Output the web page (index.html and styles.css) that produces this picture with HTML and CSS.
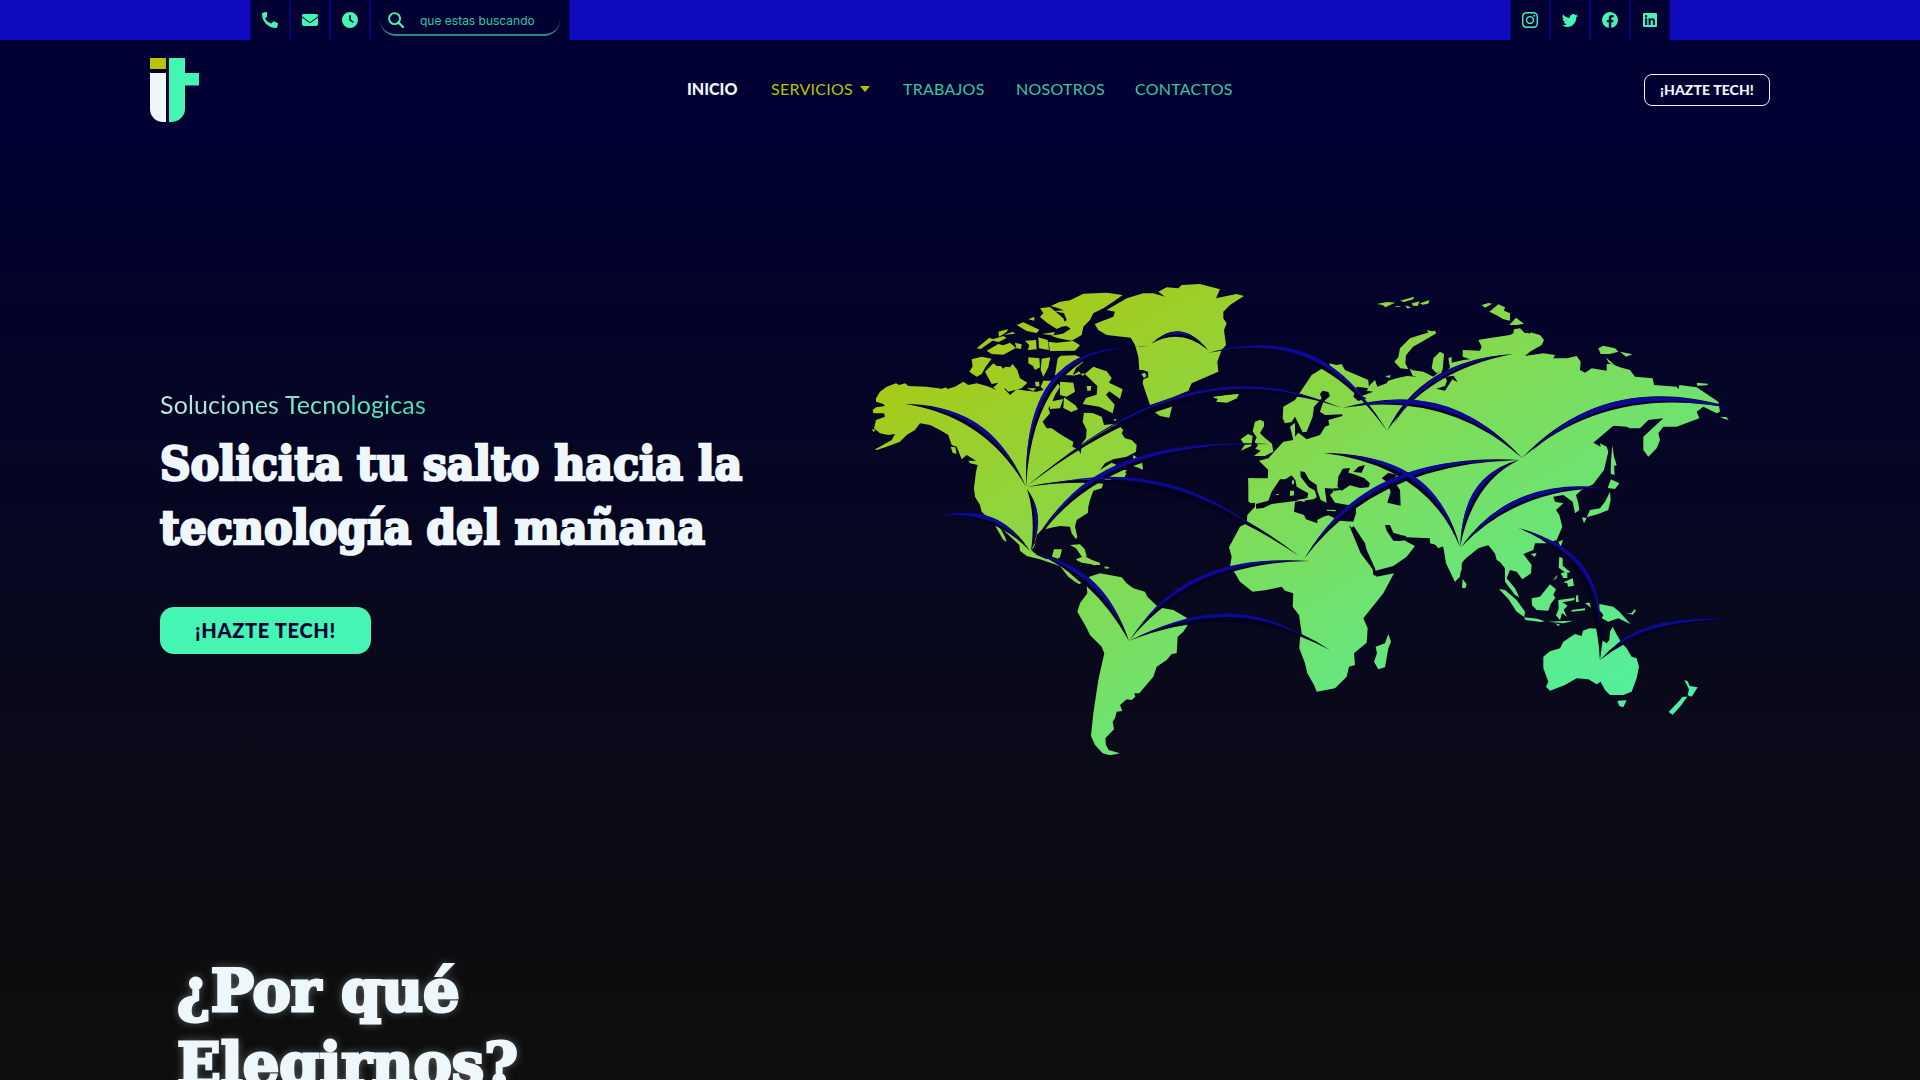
FILE: index.html
```html
<!DOCTYPE html>
<html lang="es">
<head>
<meta charset="utf-8">
<title>IT</title>
<link rel="stylesheet" href="styles.css">
</head>
<body>
<div class="topbar">
  <div class="cells">
    <a class="cell"><svg viewBox="0 0 512 512"><path d="M165 25c-8-19-28-29-48-23L29 26C12 31 0 46 0 64c0 247 201 448 448 448 18 0 33-12 38-29l24-88c6-20-4-40-23-48l-96-40c-17-7-36-2-47 12l-41 50C193 335 133 275 99 209l49-41c14-11 19-31 12-47z"/></svg></a>
    <a class="cell"><svg viewBox="0 0 512 512"><path d="M48 64a48 48 0 0 0-29 86l218 164a32 32 0 0 0 38 0l218-164a48 48 0 0 0-29-86zM0 176v208a64 64 0 0 0 64 64h384a64 64 0 0 0 64-64V176L294 339a64 64 0 0 1-76 0z"/></svg></a>
    <a class="cell"><svg viewBox="0 0 512 512"><path d="M256 512a256 256 0 1 1 0-512 256 256 0 0 1 0 512m-24-392v136c0 8 4 16 11 20l96 64a24 24 0 0 0 26-40l-85-57V120a24 24 0 0 0-48 0"/></svg></a>
    <div class="cell cell-search">
      <div class="search">
        <svg viewBox="0 0 16 16"><g fill="none" stroke="#44f5b3" stroke-width="1.900"><circle cx="6.600" cy="6.600" r="5.500"/><path d="M10.500 10.500l4.500 4.500" stroke-width="2.200" stroke-linecap="round"/></g></svg>
        <span>que estas buscando</span>
      </div>
    </div>
  </div>
  <div class="cells">
    <a class="cell"><svg viewBox="0 0 16 16"><g fill="none" stroke="#44f5b3" stroke-width="1.440"><rect x=".7" y=".7" width="14.600" height="14.600" rx="4"/><circle cx="8" cy="8" r="3.400"/></g><circle cx="12.300" cy="3.700" r="1"/></svg></a>
    <a class="cell"><svg viewBox="0 0 16 16"><path d="M5 15c6 0 9.300-5 9.300-9.300v-.4A6.700 6.700 0 0 0 16 3.500a6.500 6.500 0 0 1-1.900.5 3.300 3.300 0 0 0 1.400-1.800 6.500 6.500 0 0 1-2 .8 3.300 3.300 0 0 0-5.600 3A9.300 9.300 0 0 1 1.100 2.600a3.300 3.300 0 0 0 1 4.400A3.300 3.300 0 0 1 .6 6.600a3.300 3.300 0 0 0 2.700 3.200 3.200 3.200 0 0 1-1.500.1 3.300 3.300 0 0 0 3.100 2.200A6.600 6.600 0 0 1 0 13.500 9.300 9.300 0 0 0 5 15"/></svg></a>
    <a class="cell"><svg viewBox="0 0 16 16"><path d="M16 8a8 8 0 1 0-9.200 7.900v-5.600h-2V8h2V6.300c0-2 1.200-3.200 3-3.200.9 0 1.800.2 1.800.2v2h-1c-1 0-1.300.6-1.300 1.200V8h2.200l-.4 2.300H9.300v5.600A8 8 0 0 0 16 8"/></svg></a>
    <a class="cell"><svg viewBox="0 0 16 16"><path d="M2 1h12a1 1 0 0 1 1 1v12a1 1 0 0 1-1 1H2a1 1 0 0 1-1-1V2a1 1 0 0 1 1-1m1.100 5.300v6.600h2.100V6.300zm1-3.300a1.200 1.200 0 1 0 0 2.400 1.200 1.200 0 0 0 0-2.400m2.500 3.300v6.600h2V9.600c0-2 2.300-2.100 2.300 0v3.300h2V8.800c0-3.200-3.200-3.100-4.300-1.600v-.9z" fill-rule="evenodd"/></svg></a>
  </div>
</div>

<header class="header">
  <svg class="logo" viewBox="0 0 49 64"><path fill="#b8c400" d="M0 0h16v11H0z"/><path fill="#eef7fb" d="M0 15h16v49h-3A13 13 0 0 1 0 51z"/><path fill="#44f5b3" d="M19 0h16v15h14v12.500H35V51a14 13 0 0 1-14 13h-2z"/></svg>
  <nav class="nav">
    <a class="active">INICIO</a>
    <a class="services">SERVICIOS<i class="caret"></i></a>
    <a class="jobs">TRABAJOS</a>
    <a class="about">NOSOTROS</a>
    <a class="contact">CONTACTOS</a>
  </nav>
  <a class="btn-outline">¡HAZTE TECH!</a>
</header>

<main class="hero">
  <div class="copy">
    <p class="kicker">Soluciones Tecnologicas</p>
    <h1>Solicita tu salto hacia la<br>tecnología del mañana</h1>
    <a class="btn-solid">¡HAZTE TECH!</a>
  </div>
  <svg class="map" viewBox="860 270 890 500">
    <defs>
      <linearGradient id="land" x1="0" y1="0" x2="1" y2="1"><stop offset="0" stop-color="#b3c504"/><stop offset="1" stop-color="#44f5b3"/></linearGradient>
      <mask id="world" maskUnits="userSpaceOnUse" x="860" y="270" width="890" height="500">
        <!-- North and Central America -->
        <g fill="#fff" transform="translate(860 270) scale(.33333)">
          <path d="M48 385L60 365 80 350 108 340 118 345 135 340 145 348 200 350 245 356 258 352 262 357 285 350 310 335 325 345 350 340 380 348 410 360 400 352 430 353 450 375 470 358 500 362 530 365 550 360 570 345 590 335 600 350 585 375 575 400 565 415 570 430 548 455 560 475 575 475 600 492 630 510 640 515 637 530 655 538 662 552 666 520 678 505 680 480 668 455 672 428 700 430 725 440 732 465 760 462 775 465 790 480 785 490 795 505 815 510 830 525 828 545 800 560 760 568 735 580 720 600 755 578 770 585 765 595 800 600 790 620 760 625 730 640 725 655 700 662 690 690 685 710 684 728 650 750 645 770 652 800 648 808 635 790 630 770 600 768 580 772 545 780 530 795 525 825 515 840 530 855 560 868 575 863 582 838 606 838 600 862 582 874 625 905 655 932 664 938 658 943 645 935 625 920 600 888 540 868 500 858 480 842 478 825 440 790 415 765 435 800 440 816 430 810 400 758 365 725 360 705 345 680 342 655 348 605 353 585 330 580 325 572 348 572 320 555 305 568 290 530 275 525 265 495 240 480 210 465 180 460 165 480 140 495 120 515 80 530 48 541 46 538 95 510 105 492 85 495 60 490 42 475 48 450 75 440 72 430 40 430 38 420 48 412 75 408 70 402 48 395Z"/>
          <path d="M272 530l14 2 4 20-12-4zM35 478l12 1-6 7zM820 555l26 18 3 26-14-6-18-6zM775 610l25 0-8 14-22 4zM630 825l30-2 14 14 6 22-14 2-18-26zM648 868l25-10 42 22 5 5-55-7zM733 888l15 4-4 4z"/>
        </g>
        <!-- Arctic islands -->
        <g fill="#fff" transform="translate(960 280) scale(.33333)">
          <path d="M272 78l28-13 30-4 40-20 70-3 48 7-28 20-30 20-30 15-10 20-20 20-5 25-30 17-40-7-22-8 35-6 24-15-12-8-22 3 12-11 10-10-8-20-30-7 30-2-22-8z M240 85l30-4 40 34 8 20-28 12-28-18-22-18 10-12z M265 185l25 3 50-5 20 13-15 16-75 1z M50 205l38-32 14 6-40 28z M80 212l35-20 15 4 20-8 18 16-38 20-35-2z M115 155l30-8-6 10-22 13z M170 135l20-8 48 22-8 10-30-6z M195 182l33-2 2 28-27 2 5-14z M235 172l28 8 4 30-30-5z M205 118l18-8v12z M245 162l40-6-5 10z M90 180l40-12 10 6-24 12z M130 165l30-10 4 6z M165 188l20 5-2 14-14-2z"/>
          <path d="M35 238l30-8 30 6-18 24-12 22-15 8-22-15 10-16z M75 275l25-25 10 8 12 0 8 8 6-6 14 2 8-10 14 18 8 25 22 13-17 17-40 10-10-10-15 8-20-10 15-15-20 4z M205 232l33 3 2 27-15 8-6-12-14-8z M245 236l26-4-6 30-15 28-8-20z M285 285l8-50 10-8 45-1 22 20-22 18-10 22zM345 227l34 8-14 12zM335 288l22-14 10 14 33-28 40 14 15 20-8 14 41 20-8 28-32-22-10 10 26 30-6 26-40-20-50-8 10-18 32-10 2-26-40-38z M380 318l14 0-2 14-10 0z M250 302l28 0-6 40-20 8 0-20-10-10z M225 305l12 0 2 14-12 0z M300 305l40 3 5 27-25 15-20-5z M312 352l34 24 8 12-20 8-24-12z M268 365l42-8-10 28-30 2z M200 325l28 0-8 8z M460 418l10 0-4 6z"/>
        </g>
        <!-- Greenland, Iceland, British Isles, Europe and western Russia -->
        <g fill="#fff" transform="translate(1140 270) scale(.33333)">
          <path d="M-136 162L-80 140-75 125-100 120-40 85 10 70 40 70 75 80 55 65 80 52 115 55 125 45 180 42 240 58 228 85 260 78 290 72 312 78 270 105 250 125 250 145 260 160 252 180 258 225 245 240 232 275 235 305 200 320 155 340 145 362 98 382 30 405 18 370 8 340 10 328 25 322 24 305 8 300-2 300-5 260-15 225-28 203-100 195-125 180Z"/>
          <path d="M42 425L98 403 88 443 60 438Z M4 312l10-4 6 10-8 6zM215 376l14 2 68-8-6 15-30 13-33-3 6-8-12-4z M345 455l15-6 12 6v14l-12 20 14 14 22 18 4 24-25 13-33 0 20-16-16-6 8-10-10-10 6-14-12-18z M302 508l22-16 14 6-4 30-32 14 12-16z"/>
          <path d="M710 102l30-6 26 2-14 6-16 8-8-7z M780 92l42-12-2 8-28 8z M815 100l24-6-6 14-14-1z M840 100l28-10-3 11-18 3z M795 106l18 6-10 4z M760 108l24 0-10 3z M885 182l4 8-38 22-32 18-21 26-2 24 9 18-24-3-18-20 12-13 5-27 30-30 30-10z M808 295l14 10 10 16-14-4z"/>
          <path d="M325 625L383 628 385 600 357 572 385 565 400 548 430 515 460 510 450 470 465 458 465 500 475 488 500 508 540 495 555 470 568 465 565 450 607 438 607 433 555 435 540 425 550 395 570 378 565 366 548 362 540 372 545 385 522 410 518 440 500 485 488 487 465 440 455 456 435 460 428 445 430 410 465 390 485 360 515 315 550 293 572 295 568 280 590 285 605 282 615 300 685 330 687 355 650 350 640 380 655 393 680 385 665 378 700 365 680 362 690 345 705 330 712 350 740 340 745 332 770 325 800 318 830 320 815 300 850 305 880 320 905 300 905 610 330 700Z M735 318l18-2-5 8z"/>
        </g>
        <!-- Africa and the Middle East -->
        <g transform="translate(1200 460) scale(.33333)">
          <path fill="#fff" d="M205 55L145 55 145 125 165 128 165 140 142 165 140 190 120 200 87 262 95 290 90 320 105 340 120 365 158 395 200 390 245 380 255 392 280 400 278 440 297 465 305 520 300 535 298 565 315 610 322 640 342 675 350 695 405 685 440 650 447 620 465 615 462 580 500 548 503 505 490 475 550 400 582 340 530 350 521 334 580 318 620 290 645 258 615 242 620 232 690 235 715 265 730 258 738 310 765 365 780 350 785 305 835 265 865 255 885 280 890 300 900 305 900 0 205 0Z M788 357l12 16-4 12-10-2z"/>
          <path d="M168 132L205 122 215 95 240 58 256 58 275 46 286 60 290 80 325 100 322 114 290 122 215 132 190 144 168 146ZM285 125L340 118 350 112 345 92 325 80 302 50 301 34 314 36 328 60 350 75 352 92 362 120 380 128 374 84 400 86 400 95 390 105 405 128 440 134 468 142 468 160 460 185 420 182 385 166 370 170 352 180 352 190 318 178 312 165 282 155ZM412 80L415 50 428 26 450 24 445 38 460 42 492 54 510 70 506 82 480 84 450 76 425 92ZM460 36L475 20 495 15 485 38ZM545 55L565 38 590 45 580 60 592 78 600 90 602 137 562 128 572 95 560 65ZM447 195L455 203 461 198 495 250 500 270 525 325 530 348 520 345 518 328 482 280ZM555 195L570 195 580 218 605 226 618 228 622 240 600 243 580 242 560 212ZM400 85l20 0v5l-18 3z"/>
          <path fill="#fff" d="M380 149l28 1-2 4-26-2zM275 65l5-8 3 12-5 6zM270 92l12 0v14l-12 2zM225 102l13 0-4 4zM290 120l24-4 0 10z"/>
        </g>
        <!-- Asia -->
        <g transform="translate(1430 280) scale(.33333)">
          <path fill="#fff" d="M-20 310L10 290 45 280 60 262 55 235 65 230 65 248 100 240 120 238 98 230 98 210 150 212 155 200 145 180 155 178 240 165 250 160 252 148 270 145 285 160 300 157 330 165 342 180 335 195 300 215 285 228 340 220 375 225 370 235 410 235 440 228 452 245 450 270 465 278 485 265 530 272 530 252 545 252 570 262 600 270 615 290 668 295 672 315 740 320 745 328 748 315 800 322 865 365 870 395 860 400 820 380 800 395 808 415 740 440 700 440 685 460 690 480 680 505 655 530 640 510 640 470 700 415 655 420 630 445 600 445 590 440 550 437 490 488 512 500 510 490 530 500 535 515 522 570 490 612 455 630 438 645 445 670 448 690 435 700 428 665 400 645 370 650 375 665 400 670 378 690 388 705 397 740 380 780 350 790 315 790 310 810 280 822 305 855 303 880 277 898 260 875 240 870 230 895 255 925 268 952 255 945 225 905 225 865 205 840 195 820 175 795 145 800 125 810 95 850 95 870 75 905 50 850 40 800 0 790Z"/>
          <path fill="#fff" d="M5 265L10 235 30 215 42 222 38 270 20 280ZM155 75l20-6 12 2-22 12z M178 95l27-22 20 9-3 10 18 8 0 22-20-4-20-12z M238 135l20-22 24 18-22 4z M505 205l15-8 35 8 10 10-25 7-28 0z M570 215l38 8-20 7z M527 232l28 24-18-7z M800 308l34 3-2 5-30 1z M870 410l20 2 6 8-14-4z M547 495l5 35 8 25-8 4 2 26-12-4 1-40z M543 598l25 12-13 17-22-3z M540 635l2 25-7 30-30 12-35 10 10-22 30-5 15-20z M456 712l14 2-8 16z M385 785l14-6-7 22z M302 822l18-3-6 12z M-10 150l28 6-20 6z"/>
          <path d="M45 290l16-1 10-2 12 20-16-9-22 34-26-6 26-8 6-16zM285 152l15 10 2-6z"/>
        </g>
        <!-- Oceania -->
        <g fill="#fff" transform="translate(1480 540) scale(.33333)">
          <path d="M238 50l10 5 0 22 24 20-14 2-22-16z M242 100l20-6 0 20-12 0z M250 127l28-12 4 22-18 3-2-10z M218 122l14-18-2 10z M57 147l18 3 35 30 25 35-2 16-23-16-25-38z M132 232l40 4 22 8-12 2-45-6z M205 245l30-1 45-2-30 8z M225 250l16 4-6 4z M155 175l25-5 30-37 18 15-8 16 6 10-14 18-7 20-35-2-14-14z M235 180l50-7-3 8-35 6 16 10-12 12 10 22-15-12-6 22-12-15 8-20z M288 168l6-4 2 22-8 0z M275 210l40-5 0 6-40 4z M315 190l18-3 5 20-10-8z M358 192l42 8 18 15 34 38-37-18-30 10-20-10 5-10-12-15z M438 218l16 2 10-12 4 4-10 12z M478 213l14 12z"/>
          <path d="M190 350l20-16 30-9 10-20 35-23 20 6 4-16 19-7 26 1-2 18 8 12 20 14 8-10 2-25 8-15 10 20 17 30 15 15 15 25 15 5 7 25-7 35-15 40-25 10-40 0-15-15-13-25-12 8-25-15-35-3-35 20-45 17-12-12 7-15-15-40z M412 482l28-1-10 21-12-4z M613 420l10 4 6 14 24 4-18 28-12-4 4-18z M622 470l-22 30-22 24-12-8 34-36 8-10z"/>
        </g>
        <!-- South America, Caribbean, Madagascar -->
        <g fill="#fff" transform="translate(1000 550) scale(.33333)">
          <path d="M268 80L300 70 365 82 380 100 400 115 435 125 442 140 475 172 520 180 560 203 563 225 550 245 533 260 530 310 515 312 500 330 470 350 460 380 418 430 403 430 406 440 395 450 380 448 360 465 367 483 350 485 345 505 338 515 342 538 316 565 318 585 326 600 360 610 330 616 308 610 285 585 273 557 280 490 295 390 305 345 313 310 305 290 270 255 258 230 232 185 240 160 262 130 260 105Z"/>
          <path d="M228 26l12 4-4 5z M250 38l25-8 24 8 2 6-20 2-10-5z M312 50l16 4-12 2z M240 0l8 0 12 18-12-4z M1165 252l8 23-8 20-10 57-20 6-13-23 9-25-4-20 28-10z"/>
        </g>
      </mask>
    </defs>
    <rect x="870" y="284" width="860" height="471" fill="url(#land)" mask="url(#world)"/>
    <g class="arc-edge">
      <path d="M905 404Q991 404 1026 487Q985 416 905 404Z"/><path d="M1026 487Q1023 342 1138 347Q1034 350 1026 487Z"/><path d="M1151 344Q1180 316 1208 350Q1180 327 1151 344Z"/><path d="M1208 353Q1322 321 1387 431Q1316 331 1208 353Z"/><path d="M1027 486Q1195 345 1342 408Q1195 356 1027 486Z"/><path d="M1342 408Q1449 377 1522 458Q1447 391 1342 408Z"/><path d="M1387 431Q1421 360 1513 354Q1428 370 1387 431Z"/><path d="M1522 458Q1608 367 1740 410Q1610 382 1522 458Z"/><path d="M1027 487Q1169 455 1299 556Q1165 465 1027 487Z"/><path d="M1027 489Q1047 516 1031 551Q1036 516 1027 489Z"/><path d="M934 516Q998 500 1030 551Q994 512 934 516Z"/><path d="M1030 551Q1086 434 1270 444Q1094 444 1030 551Z"/><path d="M1031 551Q1103 564 1129 641Q1093 576 1031 551Z"/><path d="M1129 641Q1187 552 1310 561Q1193 562 1129 641Z"/><path d="M1129 641Q1234 587 1330 650Q1234 599 1129 641Z"/><path d="M1304 559Q1368 451 1520 460Q1376 463 1304 559Z"/><path d="M1324 453Q1436 454 1460 547Q1427 466 1324 453Z"/><path d="M1460 547Q1463 474 1519 460Q1473 482 1460 547Z"/><path d="M1461 547Q1511 476 1608 488Q1517 488 1461 547Z"/><path d="M1518 528Q1604 548 1600 660Q1594 556 1518 528Z"/><path d="M1600 660Q1640 613 1733 619Q1646 623 1600 660Z"/>
      <path d="M1600 660L1599 620 1604 630Z M1137 347l12-1-8 1z"/>
    </g>
    <g class="arc-core">
      <path d="M915 405Q990 409 1018 474Q986 415 915 405Z"/><path d="M1026 477Q1026 344 1134 348Q1032 349 1026 477Z"/><path d="M1158 340Q1180 322 1200 342Q1180 327 1158 340Z"/><path d="M1212 352Q1322 323 1378 419Q1318 330 1212 352Z"/><path d="M1050 468Q1197 348 1330 404Q1195 354 1050 468Z"/><path d="M1352 407Q1447 380 1512 450Q1447 390 1352 407Z"/><path d="M1394 424Q1424 363 1505 355Q1428 368 1394 424Z"/><path d="M1532 451Q1609 370 1738 410Q1610 380 1532 451Z"/><path d="M1050 484Q1168 457 1260 532Q1166 463 1050 484Z"/><path d="M1031 496Q1043 516 1033 543Q1038 516 1031 496Z"/><path d="M938 516Q997 503 1022 543Q995 511 938 516Z"/><path d="M1042 535Q1090 436 1264 444Q1094 443 1042 535Z"/><path d="M1037 554Q1101 567 1123 628Q1096 574 1037 554Z"/><path d="M1138 629Q1189 554 1300 561Q1192 561 1138 629Z"/><path d="M1140 636Q1234 590 1306 638Q1234 597 1140 636Z"/><path d="M1310 550Q1370 453 1510 461Q1375 461 1310 550Z"/><path d="M1334 454Q1434 457 1455 537Q1429 464 1334 454Z"/><path d="M1461 538Q1465 476 1512 464Q1471 481 1461 538Z"/><path d="M1468 540Q1512 479 1605 488Q1516 486 1468 540Z"/><path d="M1522 530Q1602 550 1600 625Q1596 555 1522 530Z"/><path d="M1612 649Q1642 615 1730 619Q1645 621 1612 649Z"/>
    </g>
  </svg>
</main>

<section class="why">
  <h2>¿Por qué<br>Elegirnos?</h2>
</section>
</body>
</html>
```
FILE: styles.css
```css
* { box-sizing: border-box; }
body {
  margin: 0;
  height: 1080px;
  overflow: hidden;
  background: linear-gradient(#000033 100px, #0e0e0e 1010px);
  font-family: Lato, sans-serif;
  color: #eef7fb;
}

.topbar {
  height: 40px;
  padding: 0 250px;
  display: flex;
  justify-content: space-between;
  background: #0f0abe;
}
.cells { display: flex; }
.cell {
  width: 40px;
  height: 40px;
  display: flex;
  align-items: center;
  justify-content: center;
  background: #000033;
  border: solid #08057a;
  border-width: 0 1px;
}
.cell svg { width: 16px; height: 16px; fill: #44f5b3; }
.cell-search { width: 200px; align-items: flex-start; }
.search {
  width: 180px;
  height: 36px;
  display: flex;
  align-items: center;
  gap: 16px;
  padding: 6px 0 0 8px;
  border-bottom: 2px solid #2a8c80;
  border-radius: 16px;
  font: 12px Inter, sans-serif;
  color: #35c6a0;
}

.header {
  height: 100px;
  padding: 0 150px;
  display: flex;
  align-items: center;
  background: #000033;
}
.logo { width: 49px; height: 64px; }
.nav {
  flex: 1;
  margin-left: 488px;
  padding-bottom: 3px;
  display: flex;
  font-size: 16px;
  letter-spacing: .25px;
  color: #36c89f;
}
.nav a { white-space: nowrap; }
.active { width: 84px; font-weight: 900; letter-spacing: 0; color: #eef7fb; }
.services { width: 132px; color: #b8c400; }
.jobs { width: 113px; }
.about { width: 119px; }
.caret {
  display: inline-block;
  margin-left: 7px;
  vertical-align: 3px;
  border: solid transparent;
  border-width: 6px 5.5px 0;
  border-top-color: #b8c400;
}
.btn-outline {
  width: 126px;
  height: 32px;
  border: 1px solid #eef7fb;
  border-radius: 8px;
  font-size: 14px;
  font-weight: 900;
  line-height: 30px;
  letter-spacing: .1px;
  text-align: center;
}

.hero {
  height: 780px;
  padding-left: 160px;
  display: flex;
}
.copy { width: 700px; padding-top: 247px; }
.kicker {
  width: max-content;
  margin: 0;
  font-size: 25px;
  line-height: 34px;
  letter-spacing: .15px;
  background: linear-gradient(90deg, #c5e8e0, #40e6aa);
  background-clip: text;
  color: transparent;
}
h1, h2 {
  margin: 0;
  font-family: "DejaVu Serif Condensed", "DejaVu Serif", serif;
  font-weight: 700;
  -webkit-text-stroke: 2.6px #eef7fb;
  white-space: nowrap;
}
h1 {
  padding-top: 11px;
  font-size: 47px;
  line-height: 64px;
  letter-spacing: .3px;
}
.btn-solid {
  display: block;
  width: 211px;
  height: 47px;
  margin-top: 47px;
  border-radius: 14px;
  background: #44f5b3;
  color: #000033;
  font-size: 20px;
  font-weight: 900;
  line-height: 47px;
  letter-spacing: .7px;
  text-align: center;
}
.map { width: 890px; height: 500px; margin-top: 130px; }
.arc-edge { fill: #03031f; }
.arc-core { fill: #0d0994; }

.why { padding: 35px 0 0 177px; }
h2 {
  font-family: "DejaVu Serif", serif;
  font-size: 57.5px;
  line-height: 73px;
  -webkit-text-stroke-width: 3px;
  text-shadow: 0 0 10px rgba(238, 247, 251, .5);
}
```
